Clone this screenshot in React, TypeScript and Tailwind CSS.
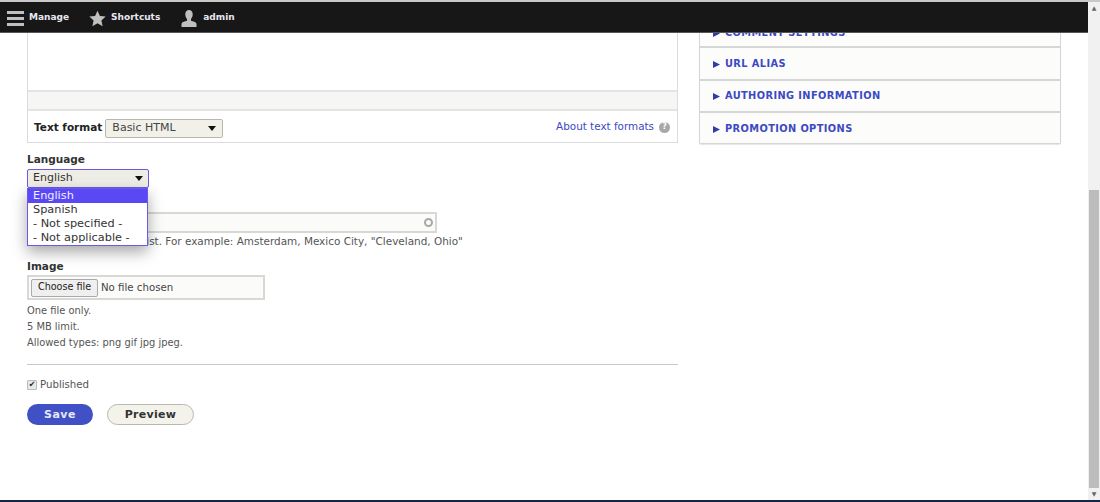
import { useState } from "react";

const SIDE_ITEMS = ["URL ALIAS", "AUTHORING INFORMATION", "PROMOTION OPTIONS"];
const LANGUAGES = ["English", "Spanish", "- Not specified -", "- Not applicable -"];

function SelectArrow() {
  return (
    <svg width="8" height="5" viewBox="0 0 8 5" className="shrink-0">
      <path d="M0 0h8L4 5z" fill="#111" />
    </svg>
  );
}

function Toolbar() {
  return (
    <header className="absolute left-0 right-[12px] top-0 z-20 flex h-[31px] items-center border-b border-[#555] bg-[#171717] pl-[7px] pt-[2px] text-[9px] font-bold text-[#e8e8f2]">
      <svg width="17" height="16" viewBox="0 0 17 16" className="mr-[5px]">
        <path d="M0 1h17v3H0zM0 7h17v3H0zM0 13h17v3H0z" fill="#c0c0c0" />
      </svg>
      <span className="mr-[20px]">Manage</span>
      <svg width="17" height="17" viewBox="0 0 24 24" className="mr-[5px]">
        <path d="M12 1l3.400 7.400 8.100.9-6 5.500 1.700 8L12 18.700 4.800 22.800l1.700-8-6-5.500 8.100-.9z" fill="#c0c0c0" />
      </svg>
      <span className="mr-[21px]">Shortcuts</span>
      <svg width="16" height="17" viewBox="0 0 16 17" className="mr-[6px]">
        <path d="M8 0c2.300 0 3.700 1.700 3.700 4.200 0 2-.8 3.700-1.700 4.800v1.800c2 .6 5 1.200 5.500 3V17H.5v-3.200c.5-1.800 3.500-2.400 5.500-3V9C5.100 7.900 4.300 6.200 4.300 4.200 4.300 1.700 5.700 0 8 0z" fill="#c0c0c0" />
      </svg>
      <span>admin</span>
    </header>
  );
}

function EditorPanel() {
  return (
    <div className="border-x border-b border-[#dcdcdc]">
      <div className="h-[88px] bg-white" />
      <div className="h-[21px] border-y-2 border-[#e4e4e4] bg-[#f6f6f4]" />
      <div className="flex h-[31px] items-center pl-[6px] pr-[7px] pt-[3px]">
        <span className="mr-[3px] text-[10.500px] font-bold text-[#222]">Text format</span>
        <div className="flex h-[19px] w-[118px] items-center justify-between rounded-[2px] border border-[#b8b8b0] bg-[#f1f1ea] px-[6px] text-[11px] text-[#444]">
          Basic HTML
          <SelectArrow />
        </div>
        <a className="mb-[2px] ml-auto text-[10.400px] text-[#3b49c4]">About text formats</a>
        <span className="mb-[2px] ml-[5px] flex size-[11px] items-center justify-center rounded-full bg-[#a8a8a8] text-[8px] font-bold text-white">?</span>
      </div>
    </div>
  );
}

function LanguageField() {
  const [selected] = useState(0);
  return (
    <div className="relative mt-[9px]">
      <div className="text-[10.500px] font-bold leading-[14px] text-[#333]">Language</div>
      <div className="mt-[3px] flex h-[19px] w-[122px] items-center justify-between rounded-[2px] border border-[#6a5ae8] bg-[#eeeee6] px-[5px] text-[11px] text-[#333]">
        English
        <SelectArrow />
      </div>
      <ul className="absolute left-0 top-[36px] z-10 w-[121px] border border-[#6a5ae8] bg-white text-[11.300px] leading-[14px] text-[#333] shadow-[0_6px_14px_rgba(0,0,0,0.35)]">
        {LANGUAGES.map((language, index) => (
          <li
            key={language}
            className={index === selected ? "bg-[#5a48f5] pl-[5px] text-[#f2f0ff]" : "pl-[5px]"}
          >
            {language}
          </li>
        ))}
      </ul>
    </div>
  );
}

function CityField() {
  return (
    <div className="mt-[24px]">
      <div className="flex h-[21px] w-[410px] items-center justify-end border-2 border-[#d8d8d4] bg-[#fbfbf9] pr-[2px]">
        <span className="size-[9px] rounded-full border-2 border-[#a8a8a8]" />
      </div>
      <p className="mt-[1px] text-[10.450px] leading-[14px] text-[#555]">
        Select from a curated list. For example: Amsterdam, Mexico City, "Cleveland, Ohio"
      </p>
    </div>
  );
}

function ImageField() {
  return (
    <div className="mt-[11px]">
      <div className="text-[10.500px] font-bold leading-[14px] text-[#333]">Image</div>
      <div className="mt-[2px] flex h-[25px] w-[238px] items-center border-2 border-[#d8d8d4] bg-[#fbfbf9] pl-[2px] text-[10.200px] text-[#444]">
        <span className="mr-[3px] flex h-[18px] w-[67px] items-center justify-center rounded-[2px] border border-[#aaa] bg-[#efefef] text-[9.600px] font-medium text-[#222]">
          Choose file
        </span>
        No file chosen
      </div>
      <div className="mt-[3px] text-[9.900px] leading-[16px] text-[#555]">
        <p>One file only.</p>
        <p>5 MB limit.</p>
        <p>Allowed types: png gif jpg jpeg.</p>
      </div>
    </div>
  );
}

function Sidebar() {
  return (
    <aside className="ml-[21px] w-[362px] overflow-hidden rounded-b-[2px] border border-t-0 border-[#d6d6d6] bg-[#fcfcfa] shadow-[0_1px_1px_rgba(0,0,0,0.1)]">
      <div className="flex h-[46px] items-end border-b-2 border-[#d6d6d6] pb-[5px] pl-[13px] text-[9.800px] font-bold tracking-[0.4px] text-[#3b49c4]">
        <svg width="7" height="7" viewBox="0 0 6 6" className="mb-[4px] mr-[5px]">
          <path d="M0 0l6 3-6 3z" fill="#2f3da8" />
        </svg>
        COMMENT SETTINGS
      </div>
      {SIDE_ITEMS.map((item, index) => (
        <div
          key={item}
          className={`flex items-center pl-[13px] pt-[2px] text-[9.800px] font-bold tracking-[0.4px] text-[#3b49c4] ${
            index < SIDE_ITEMS.length - 1 ? "h-[32.500px] border-b-2 border-[#d6d6d6]" : "h-[30px]"
          }`}
        >
          <svg width="7" height="7" viewBox="0 0 6 6" className="mr-[5px]">
            <path d="M0 0l6 3-6 3z" fill="#2f3da8" />
          </svg>
          {item}
        </div>
      ))}
    </aside>
  );
}

function Scrollbar() {
  return (
    <div className="flex w-[12px] shrink-0 flex-col bg-[#f1f1f1]">
      <div className="flex h-[12px] items-center justify-center text-[6px] leading-none text-[#666]">▲</div>
      <div className="h-[176px]" />
      <div className="mx-[1px] flex-1 bg-[#bcbcbc]" />
      <div className="flex h-[12px] items-center justify-center text-[6px] leading-none text-[#666]">▼</div>
    </div>
  );
}

export default function App() {
  return (
    <div className="flex h-[502px] w-[1100px] flex-col overflow-hidden bg-white font-['DejaVu_Sans',sans-serif]">
      <div className="h-[2px] shrink-0 bg-[#c9c9c9]" />
      <div className="relative flex min-h-0 flex-1">
        <Toolbar />
        <main className="flex min-w-0 flex-1 px-[27px]">
          <section className="w-[651px]">
            <EditorPanel />
            <LanguageField />
            <CityField />
            <ImageField />
            <hr className="mt-[13px] border-[#c8c8c8]" />
            <label className="mt-[12px] flex items-center text-[10.200px] text-[#555]">
              <span className="mr-[3px] flex size-[10px] items-center justify-center rounded-[1px] border border-[#bbb] bg-[#e8e8e8] text-[8px] leading-none text-[#222]">
                ✔
              </span>
              Published
            </label>
            <div className="mt-[12px] flex gap-[14px]">
              <button className="h-[21px] w-[66px] rounded-full bg-[#3f51c5] text-[11px] font-bold tracking-[0.5px] text-[#e8e8f5]">
                Save
              </button>
              <button className="h-[21px] w-[87px] rounded-full border border-[#b8b8ae] bg-[#f3f3ec] text-[11px] font-bold tracking-[0.3px] text-[#333]">
                Preview
              </button>
            </div>
          </section>
          <div className="self-start">
            <Sidebar />
          </div>
        </main>
        <Scrollbar />
      </div>
      <div className="h-[2px] shrink-0 bg-[#15254a]" />
    </div>
  );
}
